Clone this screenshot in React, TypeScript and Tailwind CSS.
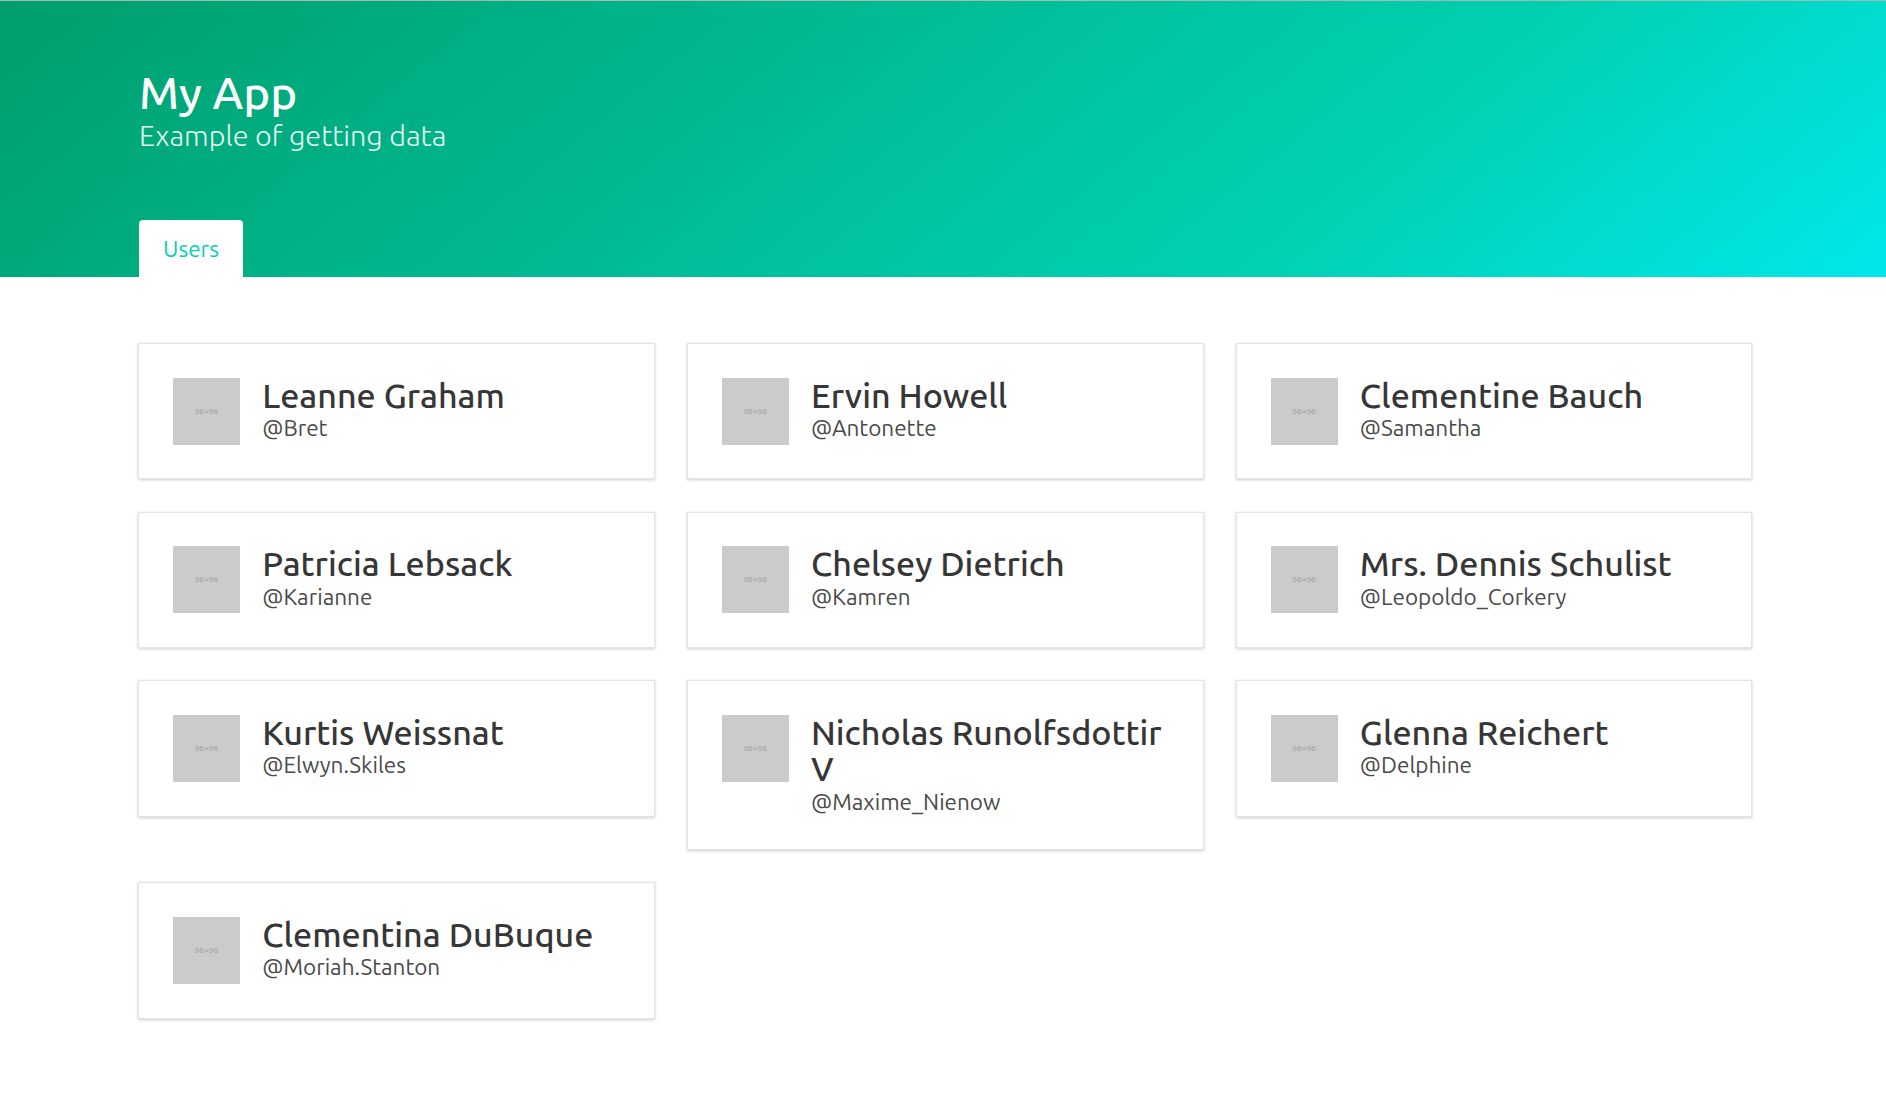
const users = [
  { name: "Leanne Graham", handle: "@Bret" },
  { name: "Ervin Howell", handle: "@Antonette" },
  { name: "Clementine Bauch", handle: "@Samantha" },
  { name: "Patricia Lebsack", handle: "@Karianne" },
  { name: "Chelsey Dietrich", handle: "@Kamren" },
  { name: "Mrs. Dennis Schulist", handle: "@Leopoldo_Corkery" },
  { name: "Kurtis Weissnat", handle: "@Elwyn.Skiles" },
  { name: "Nicholas Runolfsdottir V", handle: "@Maxime_Nienow" },
  { name: "Glenna Reichert", handle: "@Delphine" },
  { name: "Clementina DuBuque", handle: "@Moriah.Stanton" },
];

function UserCard({ name, handle }: { name: string; handle: string }) {
  return (
    <div className="flex items-start gap-[22px] border border-[#e4e4e4] bg-white p-[33.6px] shadow-[0_1px_3px_rgba(0,0,0,0.2)]">
      <div className="flex h-[67.2px] w-[67.2px] shrink-0 items-center justify-center bg-[#cbcbcb] pt-px font-['Liberation_Sans',sans-serif] text-[8px] leading-none tracking-[0.2px] text-[#a0a0a0]">
        96×96
      </div>
      <div className="-mt-px -mb-px min-w-0">
        <div className="text-[34.1px] leading-[36.4px] font-medium text-[#363636]">{name}</div>
        <div className="text-[22.5px] leading-[30px] text-[#4a4a4a]">{handle}</div>
      </div>
    </div>
  );
}

export default function App() {
  return (
    <div className="min-h-[1094px] bg-white font-['Ubuntu','Noto_Sans',sans-serif]">
      <header className="h-[277px] border-t border-t-[#a9b8b2] bg-[linear-gradient(141deg,#009e6c_0%,#00d1b2_71%,#00e7eb_100%)] pt-[65px] pl-[139px]">
        <h1 className="text-[45.6px] leading-[54px] font-medium text-white">My App</h1>
        <p className="text-[28.8px] leading-[30px] font-light text-white/90">Example of getting data</p>
        <div className="mt-[70px] flex">
          <div className="flex h-[57px] w-[104px] items-center justify-center rounded-t-[4px] bg-white text-[22.5px] text-[#00d1b2]">
            Users
          </div>
        </div>
      </header>
      <main className="grid grid-cols-3 items-start gap-x-[32.5px] gap-y-[32.2px] pt-[66px] pr-[133.6px] pl-[138.4px]">
        {users.map((u) => (
          <UserCard key={u.handle} name={u.name} handle={u.handle} />
        ))}
      </main>
    </div>
  );
}
